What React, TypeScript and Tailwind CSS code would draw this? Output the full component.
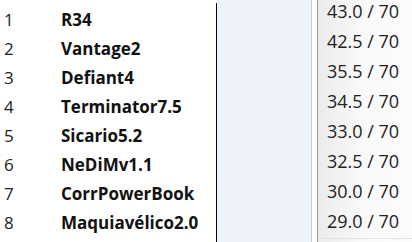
import React from "react";

const names = [
  "R34",
  "Vantage2",
  "Defiant4",
  "Terminator7.5",
  "Sicario5.2",
  "NeDiMv1.1",
  "CorrPowerBook",
  "Maquiavélico2.0",
];
const scores = ["43.0", "42.5", "35.5", "34.5", "33.0", "32.5", "30.0", "29.0"];

export default function App() {
  return (
    <div
      className="flex h-[242px] w-[412px] overflow-hidden bg-white text-[#111]"
      style={{ fontFamily: '"Open Sans", "Noto Sans", sans-serif' }}
    >
      <div className="flex w-[216px] shrink-0 flex-col pt-[5px]">
        {names.map((n, i) => (
          <div key={n} className="flex h-[29px] items-center text-[17px]">
            <span className="w-[61px] pl-[4px] font-normal text-[#222]">{i + 1}</span>
            <span className="font-bold text-[#111]">{n}</span>
          </div>
        ))}
      </div>
      <div className="mt-[3px] w-px shrink-0 bg-black" />
      <div className="w-[94px] shrink-0 bg-[#eef2fa]" />
      <div className="w-px shrink-0 bg-[#c6ccd4]" />
      <div className="w-[5px] shrink-0 bg-white" />
      <div className="w-px shrink-0 bg-[#9a9a9a]" />
      <div className="flex flex-1 flex-col bg-gradient-to-r from-[#ececec] via-[#fafafa] to-[#fcfcfc]">
        <div className="-mt-[4px] flex flex-col">
          {scores.map((s) => (
            <div key={s} className="flex h-[30px] items-center pl-[9px] text-[18px] text-[#222]">
              {s} / 70
            </div>
          ))}
        </div>
        <div className="mt-auto mb-[3px] h-px bg-[#e2e2e2]" />
      </div>
    </div>
  );
}
